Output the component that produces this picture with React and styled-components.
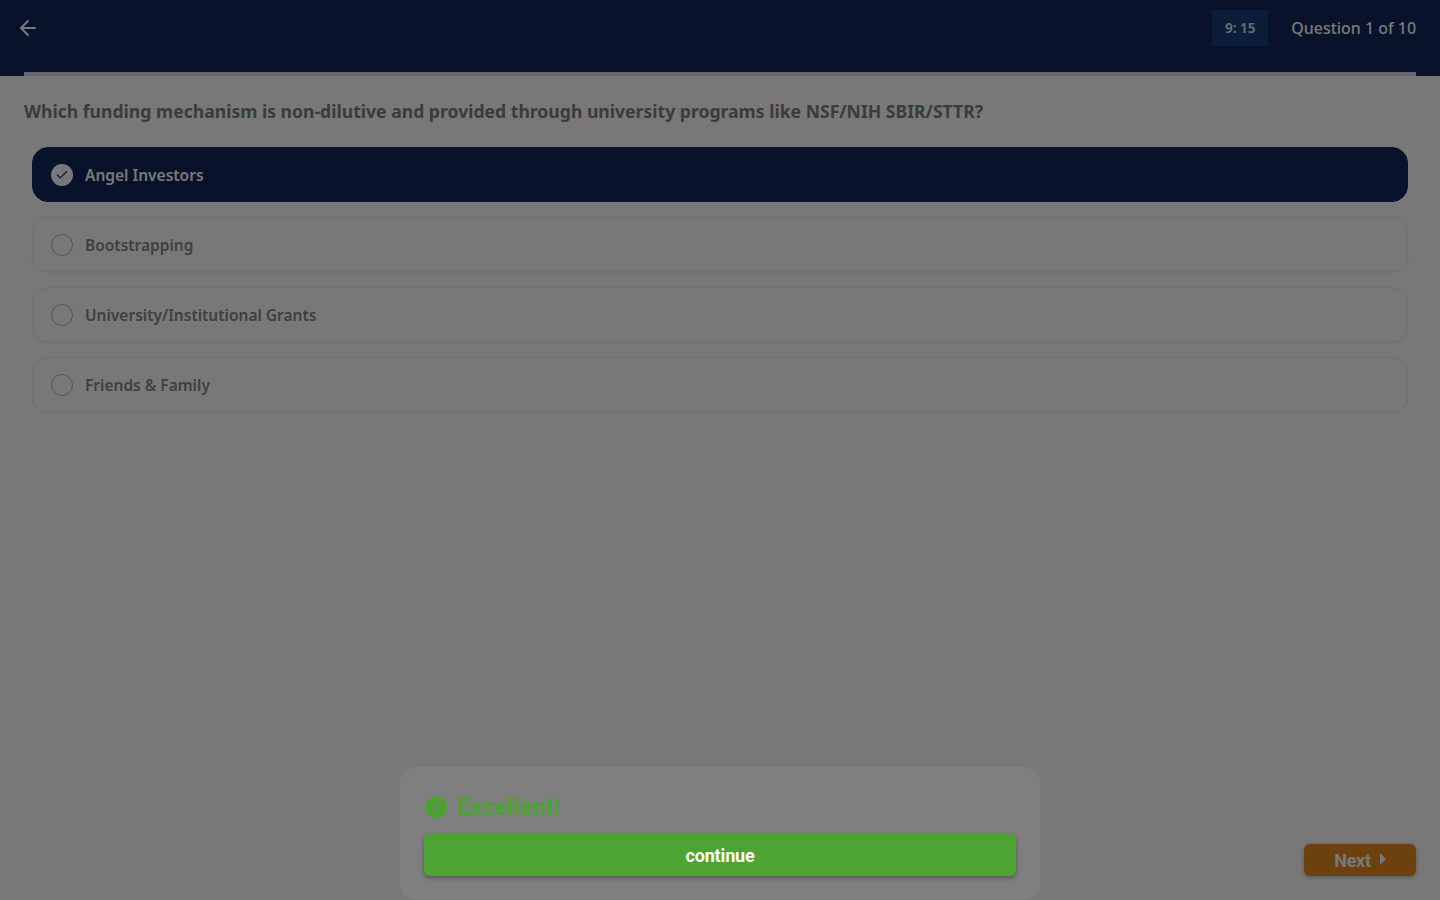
import React from "react";
import styled, { createGlobalStyle } from "styled-components";
import { ArrowLeft, Check } from "lucide-react";

const Global = createGlobalStyle`
  html, body { margin: 0; padding: 0; height: 100%; }
  body { background: #fff; font-family: "Noto Sans", "Open Sans", sans-serif; overflow: hidden; }
  * { box-sizing: border-box; }
`;

const Page = styled.div`
  height: 900px;
  display: flex;
  flex-direction: column;
  background: #ffffff;
`;

const Header = styled.header`
  height: 76px;
  flex: none;
  display: flex;
  flex-direction: column;
  background: #12285c;
  padding: 0 24px;
`;

const HeaderRow = styled.div`
  height: 72px;
  flex: none;
  display: flex;
  align-items: flex-start;
  padding-top: 10px;
  margin: 0 0 0 -8px;
`;

const BackButton = styled.button`
  width: 24px;
  height: 36px;
  padding: 0;
  border: 0;
  background: none;
  color: #ffffff;
  display: flex;
  align-items: center;
  justify-content: center;
`;

const Timer = styled.div`
  margin-left: auto;
  width: 56px;
  height: 36px;
  background: #18407a;
  border-radius: 2px;
  display: flex;
  align-items: center;
  justify-content: center;
  color: #e4e8f0;
  font-size: 13.5px;
  font-weight: 600;
`;

const Counter = styled.div`
  margin-left: 23px;
  height: 36px;
  display: flex;
  align-items: center;
  color: #ffffff;
  font-size: 15.95px;
  font-weight: 500;
`;

const Progress = styled.div`
  height: 4px;
  background: #dcd9ee;
`;

const Main = styled.main`
  flex: 1;
  padding: 23px 32px 0 24px;
`;

const Question = styled.h1`
  margin: 0;
  font-size: 17.6px;
  line-height: 24px;
  font-weight: 700;
  color: #7e7e7e;
`;

const Options = styled.div`
  margin: 24px 0 0 8px;
  display: flex;
  flex-direction: column;
  gap: 15px;
`;

const Option = styled.div`
  height: 55px;
  border-radius: 16px;
  display: flex;
  align-items: center;
  gap: 12px;
  padding: 0 18px;
  font-size: 15.5px;
  font-weight: 600;
  background: ${(p) => (p.$selected ? "#12285c" : "#ffffff")};
  color: ${(p) => (p.$selected ? "#ffffff" : "#888888")};
  border: 1px solid ${(p) => (p.$selected ? "#12285c" : "#f2f2f2")};
  box-shadow: ${(p) => (p.$selected ? "none" : "0 1px 3px rgba(0,0,0,0.06)")};
`;

const Radio = styled.span`
  width: 22px;
  height: 22px;
  flex: none;
  border-radius: 50%;
  display: flex;
  align-items: center;
  justify-content: center;
  background: ${(p) => (p.$selected ? "#ffffff" : "transparent")};
  border: ${(p) => (p.$selected ? "0" : "1.5px solid #b0b0b0")};
  color: #12285c;
`;

const NextButton = styled.button`
  position: absolute;
  right: 24px;
  bottom: 24px;
  width: 112px;
  height: 32px;
  border: 0;
  border-radius: 6px;
  background: #e88a1c;
  color: #ffffff;
  font-family: Roboto, sans-serif;
  font-size: 18px;
  font-weight: 700;
  letter-spacing: -0.3px;
  display: flex;
  align-items: center;
  justify-content: center;
  gap: 9px;
  box-shadow: 0 1px 4px rgba(0, 0, 0, 0.3);
`;

const Triangle = styled.span`
  width: 0;
  height: 0;
  border-left: 6px solid #ffffff;
  border-top: 6px solid transparent;
  border-bottom: 6px solid transparent;
  margin-bottom: 2px;
`;

const Backdrop = styled.div`
  position: fixed;
  inset: 0;
  background: rgba(0, 0, 0, 0.53);
`;

const Sheet = styled.section`
  position: fixed;
  left: 400px;
  bottom: 0;
  width: 640px;
  height: 133px;
  padding: 24px;
  border-radius: 16px;
  background: #7f7f7f;
  display: flex;
  flex-direction: column;
`;

const Verdict = styled.div`
  height: 32px;
  display: flex;
  align-items: center;
  gap: 10px;
  padding-left: 1px;
  color: #4ba32f;
  font-family: Roboto, sans-serif;
  font-size: 23.6px;
  font-weight: 700;
`;

const VerdictIcon = styled.span`
  width: 22px;
  height: 22px;
  border-radius: 50%;
  background: #4ba32f;
  color: #7f7f7f;
  display: flex;
  align-items: center;
  justify-content: center;
`;

const ContinueButton = styled.button`
  margin-top: 11px;
  height: 42px;
  border: 0;
  border-radius: 6px;
  background: #4da432;
  color: #ffffff;
  font-family: Roboto, sans-serif;
  font-size: 18px;
  font-weight: 700;
  letter-spacing: -0.15px;
  box-shadow: 0 2px 4px rgba(0, 0, 0, 0.35);
`;

const options = ["Angel Investors", "Bootstrapping", "University/Institutional Grants", "Friends & Family"];

export default function App() {
  return (
    <>
      <Global />
      <Page>
        <Header>
          <HeaderRow>
            <BackButton aria-label="Back"><ArrowLeft size={24} strokeWidth={2} /></BackButton>
            <Timer>9: 15</Timer>
            <Counter>Question 1 of 10</Counter>
          </HeaderRow>
          <Progress />
        </Header>
        <Main>
          <Question>Which funding mechanism is non-dilutive and provided through university programs like NSF/NIH SBIR/STTR?</Question>
          <Options>
            {options.map((label, i) => (
              <Option key={label} $selected={i === 0}>
                <Radio $selected={i === 0}>{i === 0 && <Check size={14} strokeWidth={2} />}</Radio>
                {label}
              </Option>
            ))}
          </Options>
        </Main>
        <NextButton>Next <Triangle /></NextButton>
      </Page>
      <Backdrop />
      <Sheet>
        <Verdict>
          <VerdictIcon><Check size={14} strokeWidth={3} /></VerdictIcon>
          Excellent!
        </Verdict>
        <ContinueButton>continue</ContinueButton>
      </Sheet>
    </>
  );
}
